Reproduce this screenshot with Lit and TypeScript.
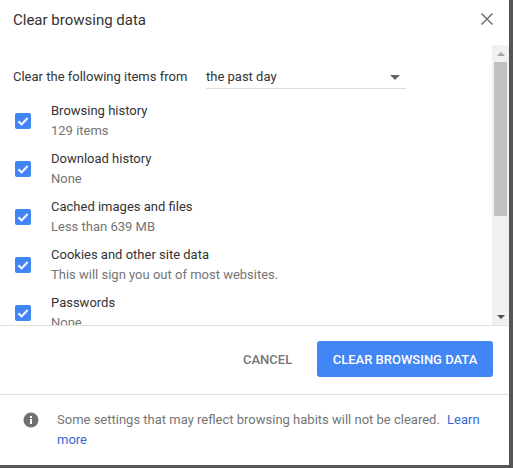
import { LitElement, html, css, svg } from "lit";
import { customElement } from "lit/decorators.js";

const ITEMS = [
  ["Browsing history", "129 items"],
  ["Download history", "None"],
  ["Cached images and files", "Less than 639 MB"],
  ["Cookies and other site data", "This will sign you out of most websites."],
  ["Passwords", "None"],
];

@customElement("app-root")
export class AppRoot extends LitElement {
  static styles = css`
    :host {
      display: block;
      width: 513px;
      height: 468px;
      background: #565656;
      font-family: Roboto, "Liberation Sans", sans-serif;
      overflow: hidden;
    }
    .dialog {
      width: 509px;
      height: 465px;
      background: #fff;
      display: flex;
      flex-direction: column;
      position: relative;
    }
    .title {
      height: 45px;
      flex: none;
      box-sizing: border-box;
      padding: 11px 0 0 13px;
      font-size: 15px;
      line-height: 18px;
      color: #333;
    }
    .close {
      position: absolute;
      left: 480px;
      top: 12px;
      width: 14px;
      height: 14px;
      color: #777;
    }
    .body {
      height: 280px;
      flex: none;
      display: flex;
      overflow: hidden;
    }
    .list {
      flex: 1;
      overflow: hidden;
      padding: 16px 0 0 13px;
    }
    .from {
      display: flex;
      align-items: center;
      height: 28px;
      font-size: 13px;
      color: #333;
      margin-top: 1px;
      margin-bottom: 7px;
    }
    .from-label {
      width: 193px;
    }
    .select {
      width: 200px;
      height: 28px;
      box-sizing: border-box;
      border-bottom: 1px solid #ddd;
      margin-top: -2px;
      display: flex;
      align-items: center;
      justify-content: space-between;
      padding: 3px 6px 0 0;
      color: #333;
    }
    .caret {
      width: 0;
      height: 0;
      border-left: 5px solid transparent;
      border-right: 5px solid transparent;
      border-top: 5px solid #666;
      margin-top: 2px;
    }
    .row {
      display: flex;
      align-items: center;
      height: 48px;
    }
    .box {
      width: 16px;
      height: 16px;
      border-radius: 2px;
      background: #4285f4;
      margin: 0 20px 0 2px;
      flex: none;
    }
    .box svg {
      display: block;
    }
    .text {
      font-size: 13px;
      line-height: 20px;
    }
    .name {
      color: #333;
    }
    .sub {
      color: #757575;
    }
    .scrollbar {
      width: 17px;
      background: #f1f1f1;
      flex: none;
      display: flex;
      flex-direction: column;
      align-items: center;
    }
    .arrow {
      height: 17px;
      flex: none;
      display: flex;
      align-items: center;
      justify-content: center;
    }
    .up {
      width: 0;
      height: 0;
      border-left: 4px solid transparent;
      border-right: 4px solid transparent;
      border-bottom: 4px solid #a3a3a3;
    }
    .down {
      width: 0;
      height: 0;
      border-left: 4px solid transparent;
      border-right: 4px solid transparent;
      border-top: 4px solid #505050;
    }
    .track {
      flex: 1;
    }
    .thumb {
      width: 13px;
      height: 154px;
      background: #c1c1c1;
    }
    .actions {
      height: 70px;
      flex: none;
      box-sizing: border-box;
      border-top: 1px solid #e0e0e0;
      border-bottom: 1px solid #e0e0e0;
      display: flex;
      align-items: center;
      justify-content: flex-end;
      padding: 0 16px 2px 0;
    }
    .btn {
      font-family: inherit;
      font-size: 13px;
      font-weight: 500;
      border: 0;
      border-radius: 3px;
      text-transform: uppercase;
      height: 36px;
      padding: 0;
      white-space: nowrap;
    }
    .cancel {
      background: #fff;
      color: #757575;
      width: 49px;
      margin-right: 25px;
    }
    .clear {
      background: #4285f4;
      color: #fff;
      width: 176px;
    }
    .note {
      flex: 1;
      display: flex;
      padding: 15px 24px 0 23px;
      font-size: 13px;
      line-height: 20px;
      color: #757575;
    }
    .info {
      width: 16px;
      height: 16px;
      flex: none;
      margin: 2px 18px 0 0;
    }
    .note a {
      color: #3367d6;
      text-decoration: none;
      margin-left: 4px;
    }
  `;

  private check() {
    return html`<div class="box">
      <svg width="16" height="16" viewBox="0 0 16 16">
        ${svg`<path d="M3.4 8.3 6.6 11.4 12.6 5" fill="none" stroke="#fff" stroke-width="2"/>`}
      </svg>
    </div>`;
  }

  render() {
    return html`<div class="dialog">
      <div class="title">Clear browsing data</div>
      <svg class="close" viewBox="0 0 14 14">
        <path d="M1.5 1.5 12.5 12.5M12.5 1.5 1.5 12.5" stroke="currentColor" stroke-width="1.6" fill="none" />
      </svg>
      <div class="body">
        <div class="list">
          <div class="from">
            <div class="from-label">Clear the following items from</div>
            <div class="select"><span>the past day</span><span class="caret"></span></div>
          </div>
          ${ITEMS.map(
            ([n, s]) => html`<div class="row">
              ${this.check()}
              <div class="text">
                <div class="name">${n}</div>
                <div class="sub">${s}</div>
              </div>
            </div>`
          )}
        </div>
        <div class="scrollbar">
          <div class="arrow"><span class="up"></span></div>
          <div class="track"><div class="thumb"></div></div>
          <div class="arrow"><span class="down"></span></div>
        </div>
      </div>
      <div class="actions">
        <button class="btn cancel">Cancel</button>
        <button class="btn clear">Clear browsing data</button>
      </div>
      <div class="note">
        <svg class="info" viewBox="0 0 16 16">
          <circle cx="8" cy="8" r="7.5" fill="#707070" />
          <rect x="7" y="7" width="2" height="5" fill="#fff" />
          <rect x="7" y="4" width="2" height="2" fill="#fff" />
        </svg>
        <div>Some settings that may reflect browsing habits will not be cleared. <a href="#">Learn more</a></div>
      </div>
    </div>`;
  }
}
